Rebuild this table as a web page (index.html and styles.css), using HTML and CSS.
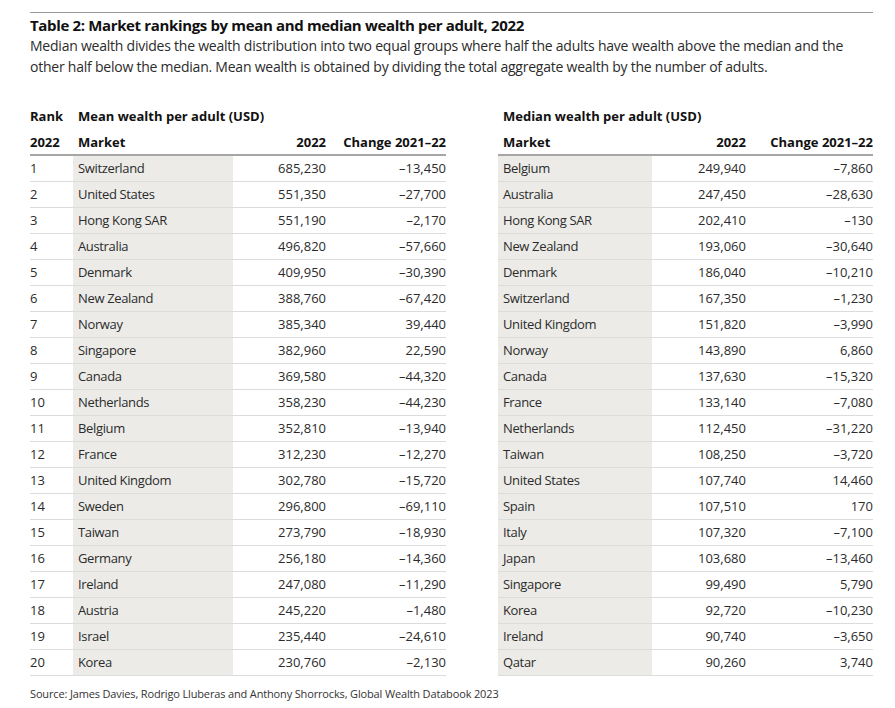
FILE: index.html
```html
<!DOCTYPE html>
<html>
<head>
<meta charset="utf-8">
<link rel="stylesheet" href="styles.css">
</head>
<body>
<div class="page">
  <div class="rule"></div>
  <h1 class="title">Table 2: Market rankings by mean and median wealth per adult, 2022</h1>
  <p class="subtitle">Median wealth divides the wealth distribution into two equal groups where half the adults have wealth above the median and the other half below the median. Mean wealth is obtained by dividing the total aggregate wealth by the number of adults.</p>
  <div class="tables">
    <table class="tbl left">
      <colgroup><col class="c-rank"><col class="c-mkt-l"><col class="c-val-l"><col class="c-chg-l"></colgroup>
      <thead>
        <tr class="h1"><th class="rank">Rank</th><th class="mkt" colspan="3">Mean wealth per adult (USD)</th></tr>
        <tr class="h2"><th class="rank">2022</th><th class="mkt">Market</th><th class="num">2022</th><th class="num">Change 2021–22</th></tr>
      </thead>
      <tbody>
        <tr><td class="rank">1</td><td class="mkt">Switzerland</td><td class="num">685,230</td><td class="num">–13,450</td></tr>
        <tr><td class="rank">2</td><td class="mkt">United States</td><td class="num">551,350</td><td class="num">–27,700</td></tr>
        <tr><td class="rank">3</td><td class="mkt">Hong Kong SAR</td><td class="num">551,190</td><td class="num">–2,170</td></tr>
        <tr><td class="rank">4</td><td class="mkt">Australia</td><td class="num">496,820</td><td class="num">–57,660</td></tr>
        <tr><td class="rank">5</td><td class="mkt">Denmark</td><td class="num">409,950</td><td class="num">–30,390</td></tr>
        <tr><td class="rank">6</td><td class="mkt">New Zealand</td><td class="num">388,760</td><td class="num">–67,420</td></tr>
        <tr><td class="rank">7</td><td class="mkt">Norway</td><td class="num">385,340</td><td class="num">39,440</td></tr>
        <tr><td class="rank">8</td><td class="mkt">Singapore</td><td class="num">382,960</td><td class="num">22,590</td></tr>
        <tr><td class="rank">9</td><td class="mkt">Canada</td><td class="num">369,580</td><td class="num">–44,320</td></tr>
        <tr><td class="rank">10</td><td class="mkt">Netherlands</td><td class="num">358,230</td><td class="num">–44,230</td></tr>
        <tr><td class="rank">11</td><td class="mkt">Belgium</td><td class="num">352,810</td><td class="num">–13,940</td></tr>
        <tr><td class="rank">12</td><td class="mkt">France</td><td class="num">312,230</td><td class="num">–12,270</td></tr>
        <tr><td class="rank">13</td><td class="mkt">United Kingdom</td><td class="num">302,780</td><td class="num">–15,720</td></tr>
        <tr><td class="rank">14</td><td class="mkt">Sweden</td><td class="num">296,800</td><td class="num">–69,110</td></tr>
        <tr><td class="rank">15</td><td class="mkt">Taiwan</td><td class="num">273,790</td><td class="num">–18,930</td></tr>
        <tr><td class="rank">16</td><td class="mkt">Germany</td><td class="num">256,180</td><td class="num">–14,360</td></tr>
        <tr><td class="rank">17</td><td class="mkt">Ireland</td><td class="num">247,080</td><td class="num">–11,290</td></tr>
        <tr><td class="rank">18</td><td class="mkt">Austria</td><td class="num">245,220</td><td class="num">–1,480</td></tr>
        <tr><td class="rank">19</td><td class="mkt">Israel</td><td class="num">235,440</td><td class="num">–24,610</td></tr>
        <tr><td class="rank">20</td><td class="mkt">Korea</td><td class="num">230,760</td><td class="num">–2,130</td></tr>
      </tbody>
    </table>
    <table class="tbl right">
      <colgroup><col class="c-mkt-r"><col class="c-val-r"><col class="c-chg-r"></colgroup>
      <thead>
        <tr class="h1"><th class="mkt" colspan="3">Median wealth per adult (USD)</th></tr>
        <tr class="h2"><th class="mkt">Market</th><th class="num">2022</th><th class="num">Change 2021–22</th></tr>
      </thead>
      <tbody>
        <tr><td class="mkt">Belgium</td><td class="num">249,940</td><td class="num">–7,860</td></tr>
        <tr><td class="mkt">Australia</td><td class="num">247,450</td><td class="num">–28,630</td></tr>
        <tr><td class="mkt">Hong Kong SAR</td><td class="num">202,410</td><td class="num">–130</td></tr>
        <tr><td class="mkt">New Zealand</td><td class="num">193,060</td><td class="num">–30,640</td></tr>
        <tr><td class="mkt">Denmark</td><td class="num">186,040</td><td class="num">–10,210</td></tr>
        <tr><td class="mkt">Switzerland</td><td class="num">167,350</td><td class="num">–1,230</td></tr>
        <tr><td class="mkt">United Kingdom</td><td class="num">151,820</td><td class="num">–3,990</td></tr>
        <tr><td class="mkt">Norway</td><td class="num">143,890</td><td class="num">6,860</td></tr>
        <tr><td class="mkt">Canada</td><td class="num">137,630</td><td class="num">–15,320</td></tr>
        <tr><td class="mkt">France</td><td class="num">133,140</td><td class="num">–7,080</td></tr>
        <tr><td class="mkt">Netherlands</td><td class="num">112,450</td><td class="num">–31,220</td></tr>
        <tr><td class="mkt">Taiwan</td><td class="num">108,250</td><td class="num">–3,720</td></tr>
        <tr><td class="mkt">United States</td><td class="num">107,740</td><td class="num">14,460</td></tr>
        <tr><td class="mkt">Spain</td><td class="num">107,510</td><td class="num">170</td></tr>
        <tr><td class="mkt">Italy</td><td class="num">107,320</td><td class="num">–7,100</td></tr>
        <tr><td class="mkt">Japan</td><td class="num">103,680</td><td class="num">–13,460</td></tr>
        <tr><td class="mkt">Singapore</td><td class="num">99,490</td><td class="num">5,790</td></tr>
        <tr><td class="mkt">Korea</td><td class="num">92,720</td><td class="num">–10,230</td></tr>
        <tr><td class="mkt">Ireland</td><td class="num">90,740</td><td class="num">–3,650</td></tr>
        <tr><td class="mkt">Qatar</td><td class="num">90,260</td><td class="num">3,740</td></tr>
      </tbody>
    </table>
  </div>
  <p class="source">Source: James Davies, Rodrigo Lluberas and Anthony Shorrocks, Global Wealth Databook 2023</p>
</div>
</body>
</html>
```
FILE: styles.css
```css
html, body {
  margin: 0;
  padding: 0;
  background: #ffffff;
}
body {
  font-family: "Open Sans", "Noto Sans", "Liberation Sans", sans-serif;
  color: #2b2b2b;
}
.page {
  width: 843px;
  padding: 12px 0 0 30px;
}
.rule {
  height: 1px;
  background: #9a9a9a;
}
.title {
  margin: 2px 0 0 0;
  font-size: 15px;
  line-height: 20px;
  font-weight: 700;
  letter-spacing: -0.35px;
  color: #111111;
}
.subtitle {
  margin: 0;
  font-size: 14px;
  line-height: 21px;
  letter-spacing: -0.23px;
  color: #2b2b2b;
}
.tables {
  display: flex;
  justify-content: space-between;
  margin-top: 26px;
  align-items: flex-start;
}
.tbl {
  border-collapse: separate;
  border-spacing: 0;
  table-layout: fixed;
  font-size: 13px;
}
.tbl.left { width: 416px; }
.tbl.right { width: 375px; }
.c-rank { width: 43px; }
.c-mkt-l { width: 160px; }
.c-val-l { width: 93px; }
.c-chg-l { width: 120px; }
.c-mkt-r { width: 154px; }
.c-val-r { width: 94px; }
.c-chg-r { width: 127px; }
.tbl th, .tbl td {
  padding: 0;
  white-space: nowrap;
  text-align: left;
}
.tbl th {
  font-weight: 700;
  color: #111111;
}
.tbl .h1 th {
  height: 26px;
}
.tbl .h2 th {
  height: 25px;
  border-bottom: 2px solid #a6a6a6;
}
.tbl td {
  height: 24px;
  padding-bottom: 1px;
  border-bottom: 1px solid #dcdcdc;
}
.tbl .mkt {
  padding-left: 5px;
}
.tbl td.mkt {
  background: #ecebe8;
  letter-spacing: -0.35px;
}
.tbl .num {
  text-align: right;
}
.source {
  margin: 10px 0 0 0;
  font-size: 11px;
  line-height: 16px;
  letter-spacing: -0.15px;
  color: #333333;
}
```
